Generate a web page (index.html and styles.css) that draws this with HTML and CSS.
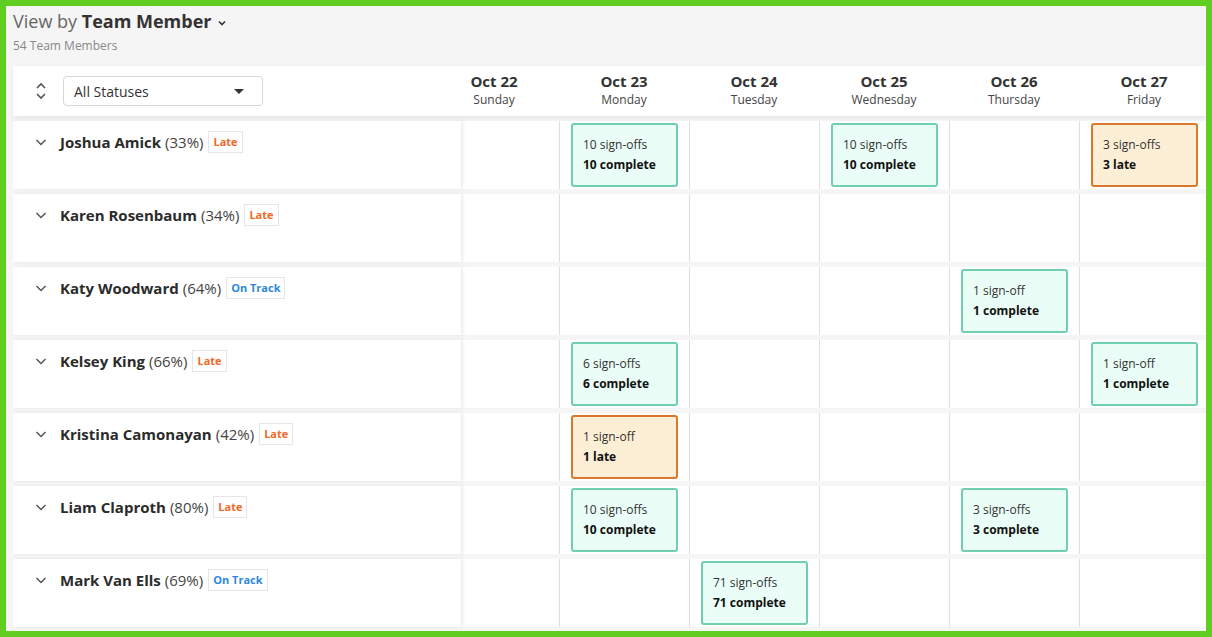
FILE: index.html
```html
<!DOCTYPE html>
<html lang="en">
<head>
  <meta charset="UTF-8">
  <title>Sign-offs by Team Member</title>
  <link rel="stylesheet" href="styles.css">
</head>
<body>
  <div class="frame">
    <div class="topbar">
      <div class="view-by">View by <strong>Team Member</strong>
        <svg class="view-caret" width="10" height="10" viewBox="0 0 10 10"><path d="M2 3.5 L5 6.5 L8 3.5" fill="none" stroke="#333" stroke-width="1.6"/></svg>
      </div>
      <div class="count">54 Team Members</div>
    </div>

    <div class="board">
      <div class="head-row">
        <div class="name-cell head-name">
          <svg class="sort-icon" width="12" height="20" viewBox="0 0 12 20"><path d="M2 7 L6 3 L10 7 M2 13 L6 17 L10 13" fill="none" stroke="#555" stroke-width="1.6"/></svg>
          <div class="status-select">
            <span>All Statuses</span>
            <span class="caret"></span>
          </div>
        </div>
        <div class="day first"><div class="date">Oct 22</div><div class="weekday">Sunday</div></div>
        <div class="day"><div class="date">Oct 23</div><div class="weekday">Monday</div></div>
        <div class="day"><div class="date">Oct 24</div><div class="weekday">Tuesday</div></div>
        <div class="day"><div class="date">Oct 25</div><div class="weekday">Wednesday</div></div>
        <div class="day"><div class="date">Oct 26</div><div class="weekday">Thursday</div></div>
        <div class="day"><div class="date">Oct 27</div><div class="weekday">Friday</div></div>
      </div>

      <div class="row">
        <div class="name-cell">
          <svg class="chev" width="12" height="12" viewBox="0 0 12 12"><path d="M1.5 4 L6 8.5 L10.5 4" fill="none" stroke="#555" stroke-width="1.5"/></svg>
          <span class="name">Joshua Amick</span> <span class="pct">(33%)</span>
          <span class="badge late">Late</span>
        </div>
        <div class="cell first"></div>
        <div class="cell"><div class="card done"><div>10 sign-offs</div><b>10 complete</b></div></div>
        <div class="cell"></div>
        <div class="cell"><div class="card done"><div>10 sign-offs</div><b>10 complete</b></div></div>
        <div class="cell"></div>
        <div class="cell"><div class="card overdue"><div>3 sign-offs</div><b>3 late</b></div></div>
      </div>

      <div class="row">
        <div class="name-cell">
          <svg class="chev" width="12" height="12" viewBox="0 0 12 12"><path d="M1.5 4 L6 8.5 L10.5 4" fill="none" stroke="#555" stroke-width="1.5"/></svg>
          <span class="name">Karen Rosenbaum</span> <span class="pct">(34%)</span>
          <span class="badge late">Late</span>
        </div>
        <div class="cell first"></div>
        <div class="cell"></div>
        <div class="cell"></div>
        <div class="cell"></div>
        <div class="cell"></div>
        <div class="cell"></div>
      </div>

      <div class="row">
        <div class="name-cell">
          <svg class="chev" width="12" height="12" viewBox="0 0 12 12"><path d="M1.5 4 L6 8.5 L10.5 4" fill="none" stroke="#555" stroke-width="1.5"/></svg>
          <span class="name">Katy Woodward</span> <span class="pct">(64%)</span>
          <span class="badge track">On Track</span>
        </div>
        <div class="cell first"></div>
        <div class="cell"></div>
        <div class="cell"></div>
        <div class="cell"></div>
        <div class="cell"><div class="card done"><div>1 sign-off</div><b>1 complete</b></div></div>
        <div class="cell"></div>
      </div>

      <div class="row">
        <div class="name-cell">
          <svg class="chev" width="12" height="12" viewBox="0 0 12 12"><path d="M1.5 4 L6 8.5 L10.5 4" fill="none" stroke="#555" stroke-width="1.5"/></svg>
          <span class="name">Kelsey King</span> <span class="pct">(66%)</span>
          <span class="badge late">Late</span>
        </div>
        <div class="cell first"></div>
        <div class="cell"><div class="card done"><div>6 sign-offs</div><b>6 complete</b></div></div>
        <div class="cell"></div>
        <div class="cell"></div>
        <div class="cell"></div>
        <div class="cell"><div class="card done"><div>1 sign-off</div><b>1 complete</b></div></div>
      </div>

      <div class="row">
        <div class="name-cell">
          <svg class="chev" width="12" height="12" viewBox="0 0 12 12"><path d="M1.5 4 L6 8.5 L10.5 4" fill="none" stroke="#555" stroke-width="1.5"/></svg>
          <span class="name">Kristina Camonayan</span> <span class="pct">(42%)</span>
          <span class="badge late">Late</span>
        </div>
        <div class="cell first"></div>
        <div class="cell"><div class="card overdue"><div>1 sign-off</div><b>1 late</b></div></div>
        <div class="cell"></div>
        <div class="cell"></div>
        <div class="cell"></div>
        <div class="cell"></div>
      </div>

      <div class="row">
        <div class="name-cell">
          <svg class="chev" width="12" height="12" viewBox="0 0 12 12"><path d="M1.5 4 L6 8.5 L10.5 4" fill="none" stroke="#555" stroke-width="1.5"/></svg>
          <span class="name">Liam Claproth</span> <span class="pct">(80%)</span>
          <span class="badge late">Late</span>
        </div>
        <div class="cell first"></div>
        <div class="cell"><div class="card done"><div>10 sign-offs</div><b>10 complete</b></div></div>
        <div class="cell"></div>
        <div class="cell"></div>
        <div class="cell"><div class="card done"><div>3 sign-offs</div><b>3 complete</b></div></div>
        <div class="cell"></div>
      </div>

      <div class="row">
        <div class="name-cell">
          <svg class="chev" width="12" height="12" viewBox="0 0 12 12"><path d="M1.5 4 L6 8.5 L10.5 4" fill="none" stroke="#555" stroke-width="1.5"/></svg>
          <span class="name">Mark Van Ells</span> <span class="pct">(69%)</span>
          <span class="badge track">On Track</span>
        </div>
        <div class="cell first"></div>
        <div class="cell"></div>
        <div class="cell"><div class="card done"><div>71 sign-offs</div><b>71 complete</b></div></div>
        <div class="cell"></div>
        <div class="cell"></div>
        <div class="cell"></div>
      </div>
    </div>
  </div>
</body>
</html>
```

FILE: styles.css
```css
html, body {
  margin: 0;
  height: 100%;
}

body {
  font-family: "Open Sans", "Liberation Sans", sans-serif;
  color: #333;
}

.frame {
  box-sizing: border-box;
  height: 637px;
  border: 6px solid #5fce21;
  background-color: #f5f5f5;
  overflow: hidden;
}

.topbar {
  padding: 3px 7px 0;
}

.view-by {
  font-size: 18px;
  line-height: 24px;
  color: #666;
}

.view-by strong {
  color: #333;
}

.view-caret {
  vertical-align: middle;
  margin-left: 1px;
}

.count {
  margin-top: 5px;
  font-size: 12px;
  line-height: 16px;
  color: #888;
}

.board {
  margin: 12px 0 0 7px;
}

.head-row {
  position: relative;
  z-index: 2;
  display: flex;
  height: 50px;
  background-color: #fff;
  box-shadow: 0 2px 4px rgba(0, 0, 0, 0.07);
}

.name-cell {
  flex: 0 0 448px;
  box-sizing: border-box;
  display: flex;
  align-items: center;
  height: 100%;
  padding: 0 0 0 22px;
  background-color: #fff;
}

.sort-icon {
  margin-right: 16px;
}

.status-select {
  box-sizing: border-box;
  width: 200px;
  height: 30px;
  display: flex;
  align-items: center;
  justify-content: space-between;
  padding: 0 18px 0 10px;
  border: 1px solid #d6d6d6;
  border-radius: 4px;
  font-size: 14px;
  color: #333;
}

.caret {
  width: 0;
  height: 0;
  border-left: 5px solid transparent;
  border-right: 5px solid transparent;
  border-top: 5px solid #333;
}

.day {
  flex: 0 0 130px;
  box-sizing: border-box;
  text-align: center;
  padding-top: 6px;
}

.day.first {
  flex-basis: 98px;
  padding-right: 32px;
}

.date {
  font-size: 15px;
  font-weight: 700;
  line-height: 18px;
}

.weekday {
  margin-top: 1px;
  font-size: 12px;
  line-height: 18px;
  color: #444;
}

.row {
  display: flex;
  height: 68px;
  margin-top: 5px;
}

.row .name-cell {
  position: relative;
  z-index: 1;
  align-items: flex-start;
  padding-top: 10px;
  box-shadow: 2px 0 3px rgba(0, 0, 0, 0.08);
  font-size: 15px;
  line-height: 22px;
}

.chev {
  flex: none;
  margin: 5px 13px 0 0;
}

.name {
  font-weight: 700;
  color: #2b2b2b;
}

.pct {
  margin-left: 4px;
  color: #444;
}

.badge {
  box-sizing: border-box;
  height: 22px;
  margin-left: 5px;
  padding: 0 4px;
  border: 1px solid #e6e6e6;
  font-size: 11px;
  font-weight: 700;
  line-height: 20px;
}

.badge.late {
  color: #f06a2c;
}

.badge.track {
  color: #2e86de;
}

.cell {
  flex: 0 0 130px;
  box-sizing: border-box;
  border-left: 1px solid #dedede;
  background-color: #fff;
  padding: 2px 0 0 11px;
}

.cell.first {
  flex-basis: 98px;
  border-left: none;
  padding: 0;
}

.card {
  box-sizing: border-box;
  width: 107px;
  height: 64px;
  padding: 10px 0 0 10px;
  border: 2px solid #6fd0ab;
  border-radius: 3px;
  background-color: #eafdf6;
  font-size: 12px;
  line-height: 20px;
  color: #333;
}

.card b {
  display: block;
  color: #111;
}

.card.overdue {
  border-color: #da792c;
  background-color: #fdefd6;
}
```
